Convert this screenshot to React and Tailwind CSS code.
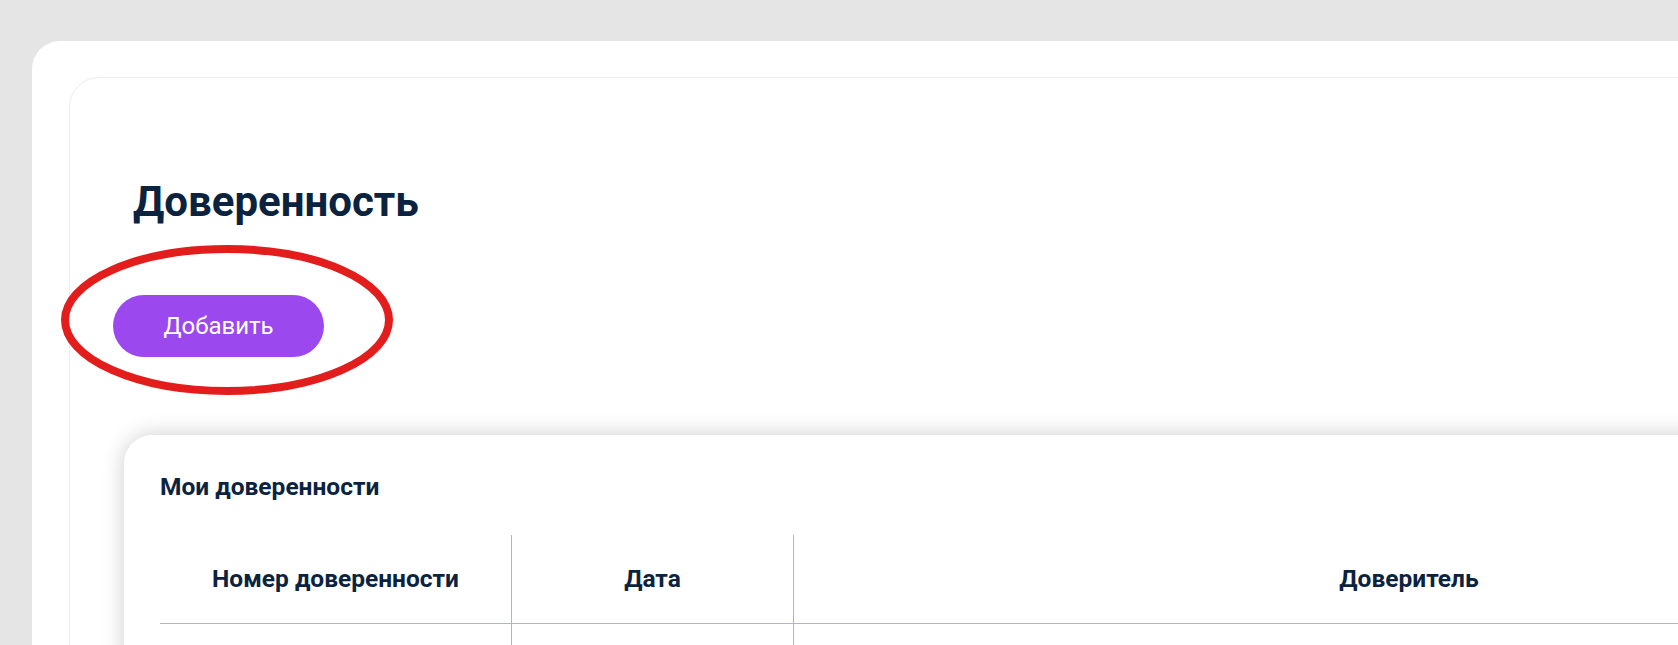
import React from "react";

const columns = [
  { key: "number", title: "Номер доверенности", width: "w-[352px]" },
  { key: "date", title: "Дата", width: "w-[282px]" },
  { key: "principal", title: "Доверитель", width: "w-[1230px]" },
];

export default function App() {
  return (
    <div
      className="relative w-[1678px] h-[645px] overflow-hidden bg-[#e5e5e5]"
      style={{ fontFamily: "Roboto, 'Noto Sans', sans-serif" }}
    >
      {/* Outer page shell */}
      <div className="ml-[32px] mt-[41px] w-[2200px] h-[900px] bg-white rounded-tl-[28px] pl-[37px] pt-[36px]">
        {/* Inner content card */}
        <div className="w-[2100px] h-[900px] border border-[#ececec] rounded-tl-[30px] bg-white">
          <h1 className="pl-[63px] pt-[100px] text-[42px] leading-[48px] font-bold text-[#0c2340]">
            Доверенность
          </h1>

          <div className="pl-[43px] mt-[69px]">
            <button className="w-[211px] h-[62px] rounded-full bg-[#9b48ee] text-white text-[24px] flex items-center justify-center">
              Добавить
            </button>
          </div>

          {/* Powers of attorney table card */}
          <div className="ml-[54px] mt-[78px] w-[2000px] h-[400px] bg-white rounded-tl-[28px] shadow-[0_0_22px_rgba(0,0,0,0.2)] pl-[36px] pt-[38px]">
            <h2 className="text-[24.5px] leading-[28px] font-bold text-[#0c2340]">
              Мои доверенности
            </h2>

            <div className="mt-[34px]">
              <div className="flex border-b border-[#b1b1d0] w-fit">
                {columns.map((c, i) => (
                  <div
                    key={c.key}
                    className={`${c.width} h-[88px] flex items-center justify-center text-[24.5px] font-bold text-[#0c2340] ${
                      i < columns.length - 1 ? "border-r border-[#b1b1d0]" : ""
                    }`}
                  >
                    {c.title}
                  </div>
                ))}
              </div>
              <div className="flex">
                {columns.map((c, i) => (
                  <div
                    key={c.key}
                    className={`${c.width} h-[60px] ${
                      i < columns.length - 1 ? "border-r border-[#b1b1d0]" : ""
                    }`}
                  />
                ))}
              </div>
            </div>
          </div>
        </div>
      </div>

      {/* Red highlight around the add button */}
      <svg
        className="absolute left-0 top-0 pointer-events-none"
        width="1678"
        height="645"
      >
        <ellipse cx="227" cy="320" rx="162" ry="71" fill="none" stroke="#e31c1c" strokeWidth="8" />
      </svg>
    </div>
  );
}
